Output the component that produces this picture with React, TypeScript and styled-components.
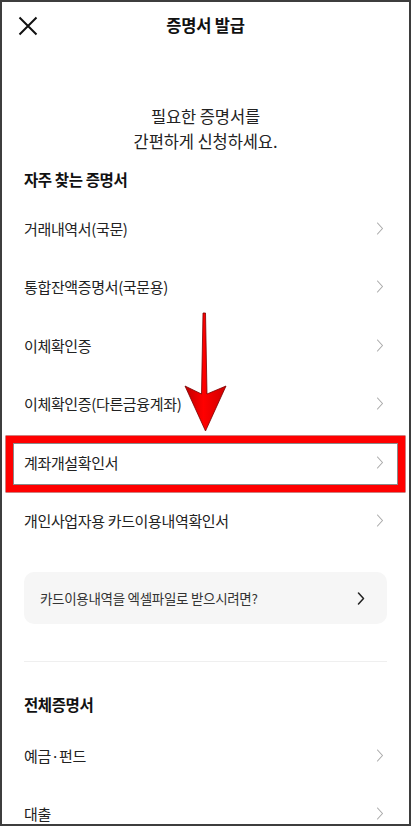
import React from 'react';
import styled, { createGlobalStyle } from 'styled-components';

const GlobalStyle = createGlobalStyle`
    html, body {
        margin: 0;
        padding: 0;
        background: #fff;
    }
    body {
        font-family: "Noto Sans CJK KR", "Noto Sans", sans-serif;
        color: #222;
    }
`;

const frequent = [
    '거래내역서(국문)',
    '통합잔액증명서(국문용)',
    '이체확인증',
    '이체확인증(다른금융계좌)',
    '계좌개설확인서',
    '개인사업자용 카드이용내역확인서',
];

const all = ['예금·펀드', '대출'];

function Chevron({ dark }: { dark?: boolean }) {
    return (
        <svg width="8" height="13" viewBox="0 0 8 13" fill="none">
            <path
                d="M1.5 1 L6.5 6.5 L1.5 12"
                stroke={dark ? '#222' : '#aaa'}
                strokeWidth={dark ? 1.5 : 1.1}
                strokeLinecap="round"
                strokeLinejoin="round"
            />
        </svg>
    );
}

function App() {
    return (
        <Frame>
            <GlobalStyle />
            <Header>
                <CloseButton aria-label="닫기">
                    <svg width="20" height="20" viewBox="0 0 20 20" fill="none">
                        <path d="M1.5 1.5 L18.5 18.5 M18.5 1.5 L1.5 18.5" stroke="#111" strokeWidth="2" />
                    </svg>
                </CloseButton>
                <Title>증명서 발급</Title>
            </Header>

            <Intro>
                필요한 증명서를
                <br />
                간편하게 신청하세요.
            </Intro>

            <Section>
                <SectionTitle $top={14} $bottom={9}>자주 찾는 증명서</SectionTitle>
                {frequent.map((name) => (
                    <Row key={name}>
                        <span>{name}</span>
                        <Chevron />
                    </Row>
                ))}

                <InfoBox>
                    <span>카드이용내역을 엑셀파일로 받으시려면?</span>
                    <Chevron dark />
                </InfoBox>

                <Divider />

                <SectionTitle $top={31} $bottom={11}>전체증명서</SectionTitle>
                {all.map((name) => (
                    <Row key={name}>
                        <span>{name}</span>
                        <Chevron />
                    </Row>
                ))}
            </Section>

            <Highlight />
            <Arrow width="46" height="124" viewBox="0 0 46 124">
                <defs>
                    <linearGradient id="arrowFill" x1="0" x2="1" y1="0" y2="0">
                        <stop offset="0" stopColor="#c00000" />
                        <stop offset="0.45" stopColor="#ff0000" />
                        <stop offset="1" stopColor="#d00000" />
                    </linearGradient>
                </defs>
                <path
                    d="M20 3 L22.5 3 L24 84 L43 76 L22.5 121 L2 76 L18.5 84 Z"
                    fill="url(#arrowFill)"
                    stroke="#7a0000"
                    strokeWidth="0.8"
                    strokeLinejoin="miter"
                />
            </Arrow>
        </Frame>
    );
}

export default App;

const Frame = styled.div`
    position: relative;
    box-sizing: border-box;
    width: 411px;
    height: 826px;
    border: 2px solid #3d3d3d;
    overflow: hidden;
    background: #fff;
`;

const Header = styled.header`
    position: relative;
    height: 46px;
    display: flex;
    align-items: center;
    justify-content: center;
`;

const CloseButton = styled.button`
    position: absolute;
    left: 16px;
    top: 14px;
    padding: 0;
    border: none;
    background: none;
    display: flex;
`;

const Title = styled.h1`
    margin: 0;
    font-size: 16.5px;
    font-weight: 700;
    letter-spacing: -0.2px;
    color: #111;
`;

const Intro = styled.p`
    margin: 56px 0 0;
    text-align: center;
    font-size: 16.5px;
    line-height: 25px;
    letter-spacing: -0.1px;
    color: #222;
`;

const Section = styled.section`
    padding: 0 22px;
    display: flex;
    flex-direction: column;
`;

const SectionTitle = styled.h2<{ $top: number; $bottom: number }>`
    margin: ${(p) => p.$top}px 0 ${(p) => p.$bottom}px;
    font-size: 15.5px;
    line-height: 22px;
    font-weight: 700;
    letter-spacing: -0.4px;
    color: #111;
`;

const Row = styled.div`
    height: 58.5px;
    display: flex;
    align-items: center;
    justify-content: space-between;
    padding-right: 3px;
    font-size: 15px;
    letter-spacing: -0.35px;
    color: #222;
`;

const InfoBox = styled.div`
    margin-top: 22px;
    height: 52px;
    box-sizing: border-box;
    padding: 0 22px 0 16px;
    display: flex;
    align-items: center;
    justify-content: space-between;
    background: #f6f6f6;
    border-radius: 10px;
    font-size: 13.5px;
    letter-spacing: -0.3px;
    color: #333;
`;

const Divider = styled.hr`
    margin: 37px 0 0;
    border: none;
    border-top: 1px solid #efefef;
`;

const Highlight = styled.div`
    position: absolute;
    left: 4px;
    top: 434px;
    width: 399px;
    height: 56px;
    box-sizing: border-box;
    border: 7px solid #ff0000;
    box-shadow: inset 0 0 0 1px #8a8a8a, 0 0 0 0.5px #a00000;
    pointer-events: none;
`;

const Arrow = styled.svg`
    position: absolute;
    left: 181px;
    top: 308px;
    pointer-events: none;
`;
